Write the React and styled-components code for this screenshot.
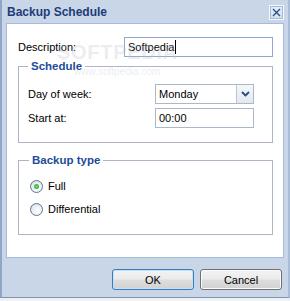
import React from "react";
import styled, { createGlobalStyle } from "styled-components";

const GlobalStyle = createGlobalStyle`
    html, body {
        margin: 0;
        padding: 0;
        background: #eef0f3;
    }
    body {
        font-family: "Liberation Sans", Arial, sans-serif;
        font-size: 11px;
        color: #000;
    }
`;

const Window = styled.div`
    position: relative;
    box-sizing: border-box;
    width: 290px;
    height: 298px;
    background: #c8d6e7;
    border-left: 2px solid #8fa6c6;
    border-right: 2px solid #a9bdd8;
    border-bottom: 1px solid #7f93ad;
    display: flex;
    flex-direction: column;
    overflow: hidden;
`;

const TitleBar = styled.div`
    height: 23px;
    display: flex;
    align-items: center;
    justify-content: space-between;
    padding: 0 4px 0 5px;
`;

const Title = styled.div`
    font-weight: bold;
    font-size: 12px;
    color: #1c3c7c;
    margin-top: 1px;
`;

const CloseButton = styled.div`
    box-sizing: border-box;
    width: 15px;
    height: 15px;
    border: 1px solid #f4f7fb;
    outline: 1px solid #a8bbd6;
    outline-offset: -2px;
    background: linear-gradient(#e7eef7, #d3dfee);
    display: flex;
    align-items: center;
    justify-content: center;
    margin-top: 2px;
`;

const Panel = styled.div`
    box-sizing: border-box;
    height: 235px;
    margin: 0 4px 0 4px;
    background: #fff;
    border: 1px solid #a3bbdf;
    padding: 13px 10px 0 11px;
`;

const Row = styled.div`
    display: grid;
    grid-template-columns: 1fr ${(p) => p.$field}px;
    align-items: center;
`;

const Label = styled.label`
    line-height: 20px;
`;

const TextBox = styled.div`
    box-sizing: border-box;
    height: 20px;
    border: 1px solid ${(p) => (p.$focus ? "#8daad6" : "#abb8ca")};
    padding: 0 3px;
    line-height: 18px;
    display: flex;
    align-items: center;
`;

const Caret = styled.span`
    display: inline-block;
    width: 1px;
    height: 14px;
    background: #000;
    margin-left: 1px;
`;

const Group = styled.fieldset`
    margin: ${(p) => p.$top}px 0 0 0;
    border: 1px solid #aeb6c6;
    padding: ${(p) => p.$pad};
    min-width: 0;
`;

const Legend = styled.legend`
    font-weight: bold;
    color: #1e4b99;
    line-height: 14px;
    padding: 0 3px;
    margin-left: 0;
    font-size: 11.5px;
`;

const Rows = styled.div`
    display: flex;
    flex-direction: column;
    gap: ${(p) => p.$gap}px;
`;

const Select = styled.div`
    box-sizing: border-box;
    height: 20px;
    border: 1px solid #abb8ca;
    display: flex;
    align-items: stretch;
`;

const SelectValue = styled.div`
    flex: 1;
    padding: 0 3px;
    line-height: 18px;
`;

const DropButton = styled.div`
    width: 16px;
    border-left: 1px solid #b9c5d6;
    background: linear-gradient(#f5f7fa, #e3e8f0);
    display: flex;
    align-items: center;
    justify-content: center;
`;

const RadioRow = styled.label`
    display: flex;
    align-items: center;
    height: 20px;
    gap: 5px;
    padding-left: 1px;
`;

const RadioDot = styled.span`
    box-sizing: border-box;
    width: 13px;
    height: 13px;
    border-radius: 50%;
    border: 1px solid #5f7592;
    background: radial-gradient(circle at 60% 65%, #ffffff 0%, #e9edf2 55%, #c7ced8 100%);
    display: flex;
    align-items: center;
    justify-content: center;
    &::after {
        content: "";
        width: 5px;
        height: 5px;
        border-radius: 50%;
        background: ${(p) => (p.$on ? "radial-gradient(circle, #6ee06e, #1f9a26)" : "transparent")};
    }
`;

const Footer = styled.div`
    display: flex;
    justify-content: flex-end;
    gap: 6px;
    padding: 11px 6px 0 0;
`;

const Button = styled.button`
    box-sizing: border-box;
    width: 82px;
    height: 21px;
    border-radius: 3px;
    border: 1px solid ${(p) => (p.$default ? "#3d7bbf" : "#707070")};
    box-shadow: inset 0 0 0 1px ${(p) => (p.$default ? "#c3e2f8" : "#fbfbfb")};
    background: linear-gradient(#f3f3f3 0%, #ebebeb 48%, #dddddd 52%, #d2d2d2 100%);
    font-family: "Liberation Sans", Arial, sans-serif;
    font-size: 11px;
    color: #000;
    padding: 0;
`;

const Watermark = styled.div`
    position: absolute;
    left: ${(p) => p.$x}px;
    top: ${(p) => p.$y}px;
    font-family: "Liberation Sans", Arial, sans-serif;
    font-size: ${(p) => p.$size}px;
    font-weight: ${(p) => p.$weight};
    line-height: 1;
    color: rgba(185, 192, 204, 0.3);
    letter-spacing: ${(p) => p.$ls}px;
    pointer-events: none;
    white-space: nowrap;
`;

const Chevron = () => (
    <svg width="9" height="6" viewBox="0 0 9 6">
        <path d="M1 1 L4.5 4.5 L8 1" fill="none" stroke="#2a4a7c" strokeWidth="1.8" />
    </svg>
);

const CloseX = () => (
    <svg width="9" height="9" viewBox="0 0 9 9">
        <path d="M1 1 L8 8 M8 1 L1 8" stroke="#2c4f8d" strokeWidth="1.4" />
    </svg>
);

const App = () => (
    <>
        <GlobalStyle />
        <Window>
            <TitleBar>
                <Title>Backup Schedule</Title>
                <CloseButton>
                    <CloseX />
                </CloseButton>
            </TitleBar>
            <Panel>
                <Row $field={149}>
                    <Label>Description:</Label>
                    <TextBox $focus>
                        Softpedia
                        <Caret />
                    </TextBox>
                </Row>
                <Group $top={2} $pad="11px 18px 14px 9px">
                    <Legend>Schedule</Legend>
                    <Rows $gap={4}>
                        <Row $field={99}>
                            <Label>Day of week:</Label>
                            <Select>
                                <SelectValue>Monday</SelectValue>
                                <DropButton>
                                    <Chevron />
                                </DropButton>
                            </Select>
                        </Row>
                        <Row $field={99}>
                            <Label>Start at:</Label>
                            <TextBox>00:00</TextBox>
                        </Row>
                    </Rows>
                </Group>
                <Group $top={10} $pad="9px 10px 15px 10px">
                    <Legend>Backup type</Legend>
                    <Rows $gap={3}>
                        <RadioRow>
                            <RadioDot $on />
                            Full
                        </RadioRow>
                        <RadioRow>
                            <RadioDot />
                            Differential
                        </RadioRow>
                    </Rows>
                </Group>
            </Panel>
            <Footer>
                <Button $default>OK</Button>
                <Button>Cancel</Button>
            </Footer>
            <Watermark $x={55} $y={42} $size={20} $weight="bold" $ls={0.7}>
                SOFTPEDIA
            </Watermark>
            <Watermark $x={72} $y={67} $size={10} $weight="normal" $ls={0}>
                www.softpedia.com
            </Watermark>
        </Window>
    </>
);

export default App;
